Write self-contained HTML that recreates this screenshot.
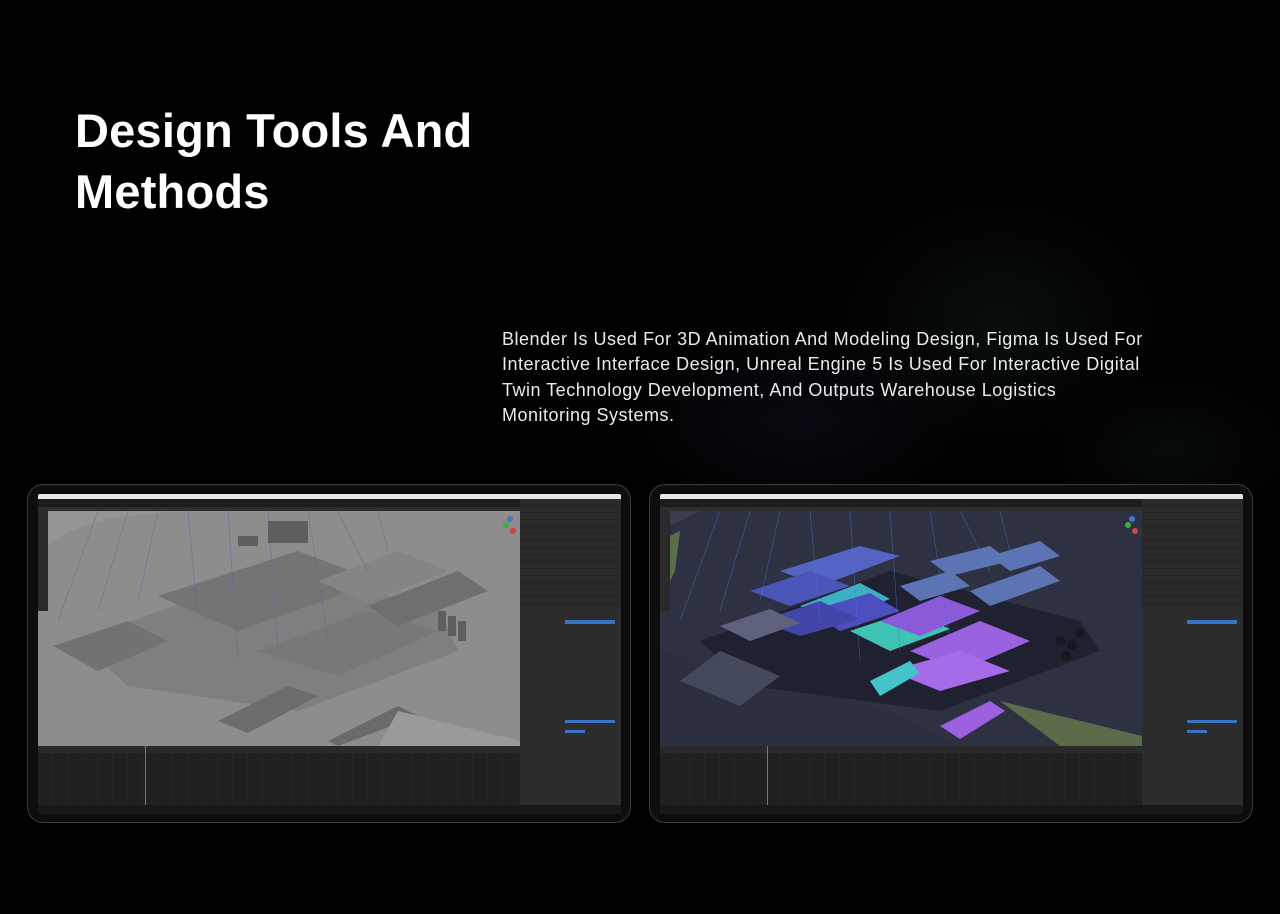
<!DOCTYPE html>
<html><head><meta charset="utf-8"><style>
*{margin:0;padding:0;box-sizing:border-box}
body{width:1280px;height:914px;overflow:hidden;background:#000;position:relative;font-family:"Liberation Sans",sans-serif}
.glow{position:absolute;inset:0;background:
radial-gradient(ellipse 240px 180px at 1000px 320px,rgba(30,50,40,.28),transparent 70%),
radial-gradient(ellipse 260px 140px at 800px 420px,rgba(40,30,60,.28),transparent 70%),
radial-gradient(ellipse 180px 110px at 1170px 450px,rgba(25,45,32,.25),transparent 70%)}
h1{position:absolute;left:75px;top:100px;font-size:47px;line-height:61px;color:#fff;font-weight:bold;white-space:nowrap;letter-spacing:.2px}
p{position:absolute;left:502px;top:327px;font-size:18px;line-height:25.3px;color:#ebebeb;white-space:nowrap;letter-spacing:.5px}
.tab{position:absolute;top:484px;width:604px;height:339px;background:#0d0d0f;border:1px solid #3b3b40;border-radius:16px}
.scr{position:absolute;left:10px;top:9px;width:583px;height:320px;background:#1e1e1e;overflow:hidden;border-radius:2px}
.scr div{position:absolute}
.rows{background:repeating-linear-gradient(180deg,#2a2a2a 0 6px,#242424 6px 7px)}
</style></head><body>
<div class="glow"></div>
<h1>Design Tools And<br>Methods</h1>
<p>Blender Is Used For 3D Animation And Modeling Design, Figma Is Used For<br>Interactive Interface Design, Unreal Engine 5 Is Used For Interactive Digital<br>Twin Technology Development, And Outputs Warehouse Logistics<br>Monitoring Systems.</p>

<!-- LEFT TABLET -->
<div class="tab" style="left:27px">
<div class="scr">
<div style="left:0;top:0;width:583px;height:5px;background:#e6e6e6"></div>
<div style="left:0;top:5px;width:583px;height:8px;background:#1c1c1c"></div>
<div style="left:0;top:13px;width:482px;height:4px;background:#2e2e2e"></div>
<div style="left:0;top:17px;width:482px;height:235px;background:#8e8e8e;overflow:hidden">
<svg width="482" height="235" viewBox="0 0 482 235">
<rect width="482" height="235" fill="#8d8d8d"/>
<path d="M0 40 Q40 10 90 5 L140 0 L0 0Z" fill="#959595"/>
<path d="M40 130 L230 60 L400 95 L420 140 L260 200 L90 175Z" fill="#7f7f7f"/>
<path d="M120 85 L260 40 L340 70 L200 120Z" fill="#747474"/>
<path d="M220 140 L330 100 L400 120 L300 165Z" fill="#787878"/>
<path d="M280 70 L360 40 L410 60 L330 92Z" fill="#858585"/>
<path d="M330 95 L420 60 L450 80 L360 115Z" fill="#6f6f6f"/>
<path d="M180 210 L250 175 L280 185 L210 222Z" fill="#6c6c6c"/>
<path d="M290 230 L360 195 L380 205 L300 235Z" fill="#6a6a6a"/>
<path d="M15 135 L90 110 L130 130 L60 160Z" fill="#727272"/>
<path d="M360 200 L482 230 L482 235 L340 235Z" fill="#9a9a9a"/>
<g stroke="#4b6fa8" stroke-width=".6" opacity=".7">
<line x1="60" y1="0" x2="20" y2="110"/><line x1="90" y1="0" x2="60" y2="100"/><line x1="120" y1="0" x2="100" y2="90"/><line x1="150" y1="0" x2="160" y2="110"/><line x1="190" y1="0" x2="200" y2="150"/><line x1="230" y1="0" x2="240" y2="140"/><line x1="270" y1="0" x2="290" y2="130"/><line x1="300" y1="0" x2="330" y2="60"/><line x1="340" y1="0" x2="350" y2="40"/>
</g>
<g fill="#5e5e5e"><rect x="230" y="10" width="40" height="22"/><rect x="200" y="25" width="20" height="10"/><rect x="400" y="100" width="8" height="20"/><rect x="410" y="105" width="8" height="20"/><rect x="420" y="110" width="8" height="20"/></g>
<circle cx="475" cy="20" r="3" fill="#c44"/><circle cx="468" cy="14" r="3" fill="#4a4"/><circle cx="472" cy="8" r="3" fill="#47c"/>
</svg></div>
<div style="left:0;top:17px;width:10px;height:100px;background:#2a2a2a"></div>
<div class="rows" style="left:482px;top:5px;width:101px;height:108px"></div>
<div style="left:482px;top:113px;width:101px;height:199px;background:#2c2c2c"></div>
<div style="left:527px;top:126px;width:50px;height:4px;background:#3b73c4"></div>
<div style="left:527px;top:226px;width:50px;height:3px;background:#3b73c4"></div>
<div style="left:527px;top:236px;width:20px;height:3px;background:#3b73c4"></div>
<div style="left:0;top:252px;width:482px;height:7px;background:#2a2a2a"></div>
<div style="left:0;top:259px;width:482px;height:52px;background:repeating-linear-gradient(90deg,#202020 0 14px,#252525 14px 15px)"></div>
<div style="left:107px;top:252px;width:1px;height:59px;background:#4a7dd0"></div>
<div style="left:0;top:311px;width:583px;height:9px;background:#181818"></div>
</div></div>

<!-- RIGHT TABLET -->
<div class="tab" style="left:649px">
<div class="scr">
<div style="left:0;top:0;width:583px;height:5px;background:#e6e6e6"></div>
<div style="left:0;top:5px;width:583px;height:8px;background:#1c1c1c"></div>
<div style="left:0;top:13px;width:482px;height:4px;background:#2e2e2e"></div>
<div style="left:0;top:17px;width:482px;height:235px;background:#2b2e3e;overflow:hidden">
<svg width="482" height="235" viewBox="0 0 482 235">
<rect width="482" height="235" fill="#2e3142"/>
<path d="M0 20 L40 0 L0 0Z" fill="#3a3d4c"/>
<path d="M0 140 L0 235 L300 235 L230 200 L80 160Z" fill="#2c2f3f"/>
<path d="M0 30 L20 20 L15 60 L0 90Z" fill="#5a6e4c"/>
<path d="M340 190 L482 225 L482 235 L400 235Z" fill="#5c6c4a"/>
<path d="M40 130 L230 60 L420 110 L440 140 L280 200 L90 175Z" fill="#1f2130"/>
<path d="M120 60 L200 35 L240 45 L160 75Z" fill="#5563c4"/>
<path d="M90 80 L150 60 L190 75 L130 95Z" fill="#4a55b8"/>
<path d="M140 95 L200 72 L230 88 L170 110Z" fill="#3fb0c4"/>
<path d="M150 100 L210 82 L240 100 L180 120Z" fill="#4c4fc0"/>
<path d="M100 110 L160 90 L200 108 L140 125Z" fill="#4246a8"/>
<path d="M190 120 L250 100 L290 118 L230 140Z" fill="#3fc3b4"/>
<path d="M220 110 L280 85 L320 100 L260 125Z" fill="#8a5ad8"/>
<path d="M250 140 L320 110 L370 130 L300 160Z" fill="#9b62e0"/>
<path d="M230 160 L300 140 L350 160 L280 180Z" fill="#a56be8"/>
<path d="M60 115 L110 98 L140 112 L90 130Z" fill="#5e627c"/>
<path d="M210 170 L250 150 L260 162 L220 185Z" fill="#44c4c8"/>
<path d="M280 215 L330 190 L345 200 L300 228Z" fill="#9c60e0"/>
<path d="M20 170 L60 140 L120 165 L80 195Z" fill="#45495e"/>
<g fill="#5c73b4"><path d="M270 50 L330 35 L350 50 L290 65Z"/><path d="M310 80 L380 55 L400 70 L330 95Z"/><path d="M240 75 L290 60 L310 75 L260 90Z"/><path d="M330 45 L380 30 L400 45 L350 60Z"/></g>
<g fill="#17181f"><circle cx="400" cy="130" r="5"/><circle cx="412" cy="134" r="5"/><circle cx="406" cy="145" r="5"/><circle cx="420" cy="122" r="5"/></g>
<g stroke="#4a78d8" stroke-width=".6" opacity=".6">
<line x1="60" y1="0" x2="20" y2="110"/><line x1="90" y1="0" x2="60" y2="100"/><line x1="120" y1="0" x2="100" y2="90"/><line x1="150" y1="0" x2="160" y2="110"/><line x1="190" y1="0" x2="200" y2="150"/><line x1="230" y1="0" x2="240" y2="140"/><line x1="270" y1="0" x2="290" y2="130"/><line x1="300" y1="0" x2="330" y2="60"/><line x1="340" y1="0" x2="350" y2="40"/>
</g>
<circle cx="475" cy="20" r="3" fill="#c44"/><circle cx="468" cy="14" r="3" fill="#4a4"/><circle cx="472" cy="8" r="3" fill="#47c"/>
</svg></div>
<div style="left:0;top:17px;width:10px;height:100px;background:#2a2a2a"></div>
<div class="rows" style="left:482px;top:5px;width:101px;height:108px"></div>
<div style="left:482px;top:113px;width:101px;height:199px;background:#2c2c2c"></div>
<div style="left:527px;top:126px;width:50px;height:4px;background:#3b73c4"></div>
<div style="left:527px;top:226px;width:50px;height:3px;background:#3b73c4"></div>
<div style="left:527px;top:236px;width:20px;height:3px;background:#3b73c4"></div>
<div style="left:0;top:252px;width:482px;height:7px;background:#2a2a2a"></div>
<div style="left:0;top:259px;width:482px;height:52px;background:repeating-linear-gradient(90deg,#202020 0 14px,#252525 14px 15px)"></div>
<div style="left:107px;top:252px;width:1px;height:59px;background:#4a7dd0"></div>
<div style="left:0;top:311px;width:583px;height:9px;background:#181818"></div>
</div></div>
</body></html>
